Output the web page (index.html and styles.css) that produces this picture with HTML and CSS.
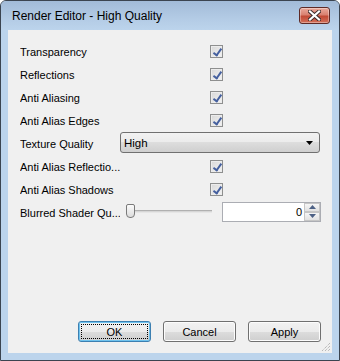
FILE: index.html
```html
<!DOCTYPE html>
<html lang="en">
<head>
    <meta charset="UTF-8">
    <title>Render Editor - High Quality</title>
    <link rel="stylesheet" href="styles.css">
</head>
<body>

    <div class="window">
        <div class="titlebar">
            <span class="title">Render Editor - High Quality</span>
            <button class="close" aria-label="Close">
                <svg width="13" height="11" viewBox="0 0 13 11">
                    <path d="M2 1.5 L11 9.5 M11 1.5 L2 9.5" stroke="#3b2a2a" stroke-width="4" stroke-linecap="square"/>
                    <path d="M2 1.5 L11 9.5 M11 1.5 L2 9.5" stroke="#fff" stroke-width="2.2" stroke-linecap="square"/>
                </svg>
            </button>
        </div>

        <div class="client">
            <div class="props">
                <div class="row">
                    <span class="label">Transparency</span>
                    <span class="check"></span>
                </div>
                <div class="row">
                    <span class="label">Reflections</span>
                    <span class="check"></span>
                </div>
                <div class="row">
                    <span class="label">Anti Aliasing</span>
                    <span class="check"></span>
                </div>
                <div class="row">
                    <span class="label">Anti Alias Edges</span>
                    <span class="check"></span>
                </div>
                <div class="row">
                    <span class="label">Texture Quality</span>
                    <div class="combo">
                        <span>High</span>
                        <svg width="7" height="4" viewBox="0 0 7 4"><path d="M0 0 H7 L3.5 4 Z" fill="#000"/></svg>
                    </div>
                </div>
                <div class="row">
                    <span class="label">Anti Alias Reflectio...</span>
                    <span class="check"></span>
                </div>
                <div class="row">
                    <span class="label">Anti Alias Shadows</span>
                    <span class="check"></span>
                </div>
                <div class="row">
                    <span class="label">Blurred Shader Qu...</span>
                    <div class="slider">
                        <span class="track"></span>
                        <span class="thumb"></span>
                    </div>
                    <div class="spin">
                        <span class="value">0</span>
                        <div class="spin-btns">
                            <span class="up"><svg width="7" height="4" viewBox="0 0 7 4"><path d="M0 4 H7 L3.5 0 Z" fill="#4d6185"/></svg></span>
                            <span class="down"><svg width="7" height="4" viewBox="0 0 7 4"><path d="M0 0 H7 L3.5 4 Z" fill="#4d6185"/></svg></span>
                        </div>
                    </div>
                </div>
            </div>

            <div class="buttons">
                <button class="btn default"><span>OK</span></button>
                <button class="btn">Cancel</button>
                <button class="btn">Apply</button>
            </div>

            <svg class="grip" width="10" height="10" viewBox="0 0 10 10">
                <path d="M9 1 L1 9 M9 4 L4 9 M9 7 L7 9" stroke="#a0a0a0" stroke-width="1" stroke-dasharray="1 1"/>
            </svg>
        </div>
    </div>

</body>
</html>
```

FILE: styles.css
```css
* {
    margin: 0;
    padding: 0;
    box-sizing: border-box;
}
body {
    font-family: 'Liberation Sans', Arial, sans-serif;
    font-size: 11px;
    color: #000;
    background-color: #fff;
}
.window {
    width: 340px;
    height: 361px;
    border: 1px solid #3b4450;
    border-radius: 6px 6px 0 0;
    background-color: #bcd4ec;
    display: flex;
    flex-direction: column;
}
.titlebar {
    height: 29px;
    display: flex;
    align-items: center;
    justify-content: space-between;
    padding: 0 9px 2px 11px;
    border-radius: 5px 5px 0 0;
    background: linear-gradient(to bottom, #a2bbd8, #b3cbe5 60%, #bcd4ec);
}
.title {
    font-size: 12px;
    color: #000;
    padding-top: 2px;
}
.close {
    width: 31px;
    height: 17px;
    margin-top: 2px;
    border: 1px solid #5e2a26;
    border-radius: 3px;
    background: linear-gradient(to bottom, #e9a99b, #d98170 45%, #c24a35 55%, #d2705a);
    box-shadow: inset 0 0 0 1px rgba(255, 255, 255, 0.35);
    display: flex;
    align-items: center;
    justify-content: center;
}
.client {
    position: relative;
    margin: 0 7px;
    height: 323px;
    background-color: #f0f0f0;
    display: flex;
    flex-direction: column;
    padding: 10px 11px 11px 12px;
}
.props {
    display: flex;
    flex-direction: column;
}
.row {
    height: 23px;
    display: flex;
    align-items: center;
}
.label {
    width: 100px;
    white-space: nowrap;
    overflow: hidden;
}
.check {
    width: 13px;
    height: 13px;
    margin-left: 90px;
    margin-top: -1px;
    border: 1px solid #8e8f8f;
    background: linear-gradient(to bottom right, #d8d8d8, #f4f4f4);
    box-shadow: inset 0 0 0 1px #ececec;
    position: relative;
}
.check::after {
    content: '';
    position: absolute;
    left: 4px;
    top: 1px;
    width: 3px;
    height: 7px;
    border: solid #45609f;
    border-width: 0 2px 2px 0;
    transform: rotate(35deg);
}
.combo {
    width: 200px;
    height: 21px;
    margin-top: -2px;
    border: 1px solid #707070;
    border-radius: 3px;
    background: linear-gradient(to bottom, #f2f2f2, #ebebeb 50%, #dddddd 50%, #cfcfcf);
    display: flex;
    align-items: center;
    justify-content: space-between;
    padding: 0 6px 0 3px;
    font-size: 11.5px;
}
.slider {
    position: relative;
    width: 92px;
    height: 23px;
}
.track {
    position: absolute;
    left: 8px;
    right: 0;
    top: 9px;
    height: 3px;
    border-top: 1px solid #b0b0b0;
    border-bottom: 1px solid #e6e6e6;
    background-color: #d6d6d6;
}
.thumb {
    position: absolute;
    left: 6px;
    top: 3px;
    width: 9px;
    height: 14px;
    border: 1px solid #7a7a7a;
    border-radius: 2px 2px 4px 4px;
    background: linear-gradient(to bottom, #fbfbfb, #dcdcdc);
}
.spin {
    width: 99px;
    height: 20px;
    margin-left: 10px;
    margin-top: -2px;
    border: 1px solid #abadb3;
    background-color: #fff;
    display: flex;
}
.value {
    flex: 1;
    text-align: right;
    padding: 3px 2px 0 0;
}
.spin-btns {
    width: 16px;
    display: flex;
    flex-direction: column;
}
.up, .down {
    flex: 1;
    display: flex;
    align-items: center;
    justify-content: center;
    border: 1px solid #c6c6c6;
    background: linear-gradient(to bottom, #f6f6f6, #e2e2e2);
}
.buttons {
    margin-top: auto;
    display: flex;
    justify-content: flex-end;
    gap: 12px;
}
.btn {
    width: 73px;
    height: 21px;
    font-family: 'Liberation Sans', Arial, sans-serif;
    font-size: 11px;
    color: #000;
    border: 1px solid #707070;
    border-radius: 3px;
    background: linear-gradient(to bottom, #f2f2f2, #ebebeb 50%, #dddddd 50%, #cfcfcf);
    box-shadow: inset 0 0 0 1px #fcfcfc;
}
.btn.default {
    border-color: #3c7fb1;
    box-shadow: inset 0 0 0 1px #6fc3ee;
    padding: 2px;
}
.btn.default span {
    display: flex;
    align-items: center;
    justify-content: center;
    height: 100%;
    border: 1px dotted #000;
}
.grip {
    position: absolute;
    right: 1px;
    bottom: 1px;
}
```
